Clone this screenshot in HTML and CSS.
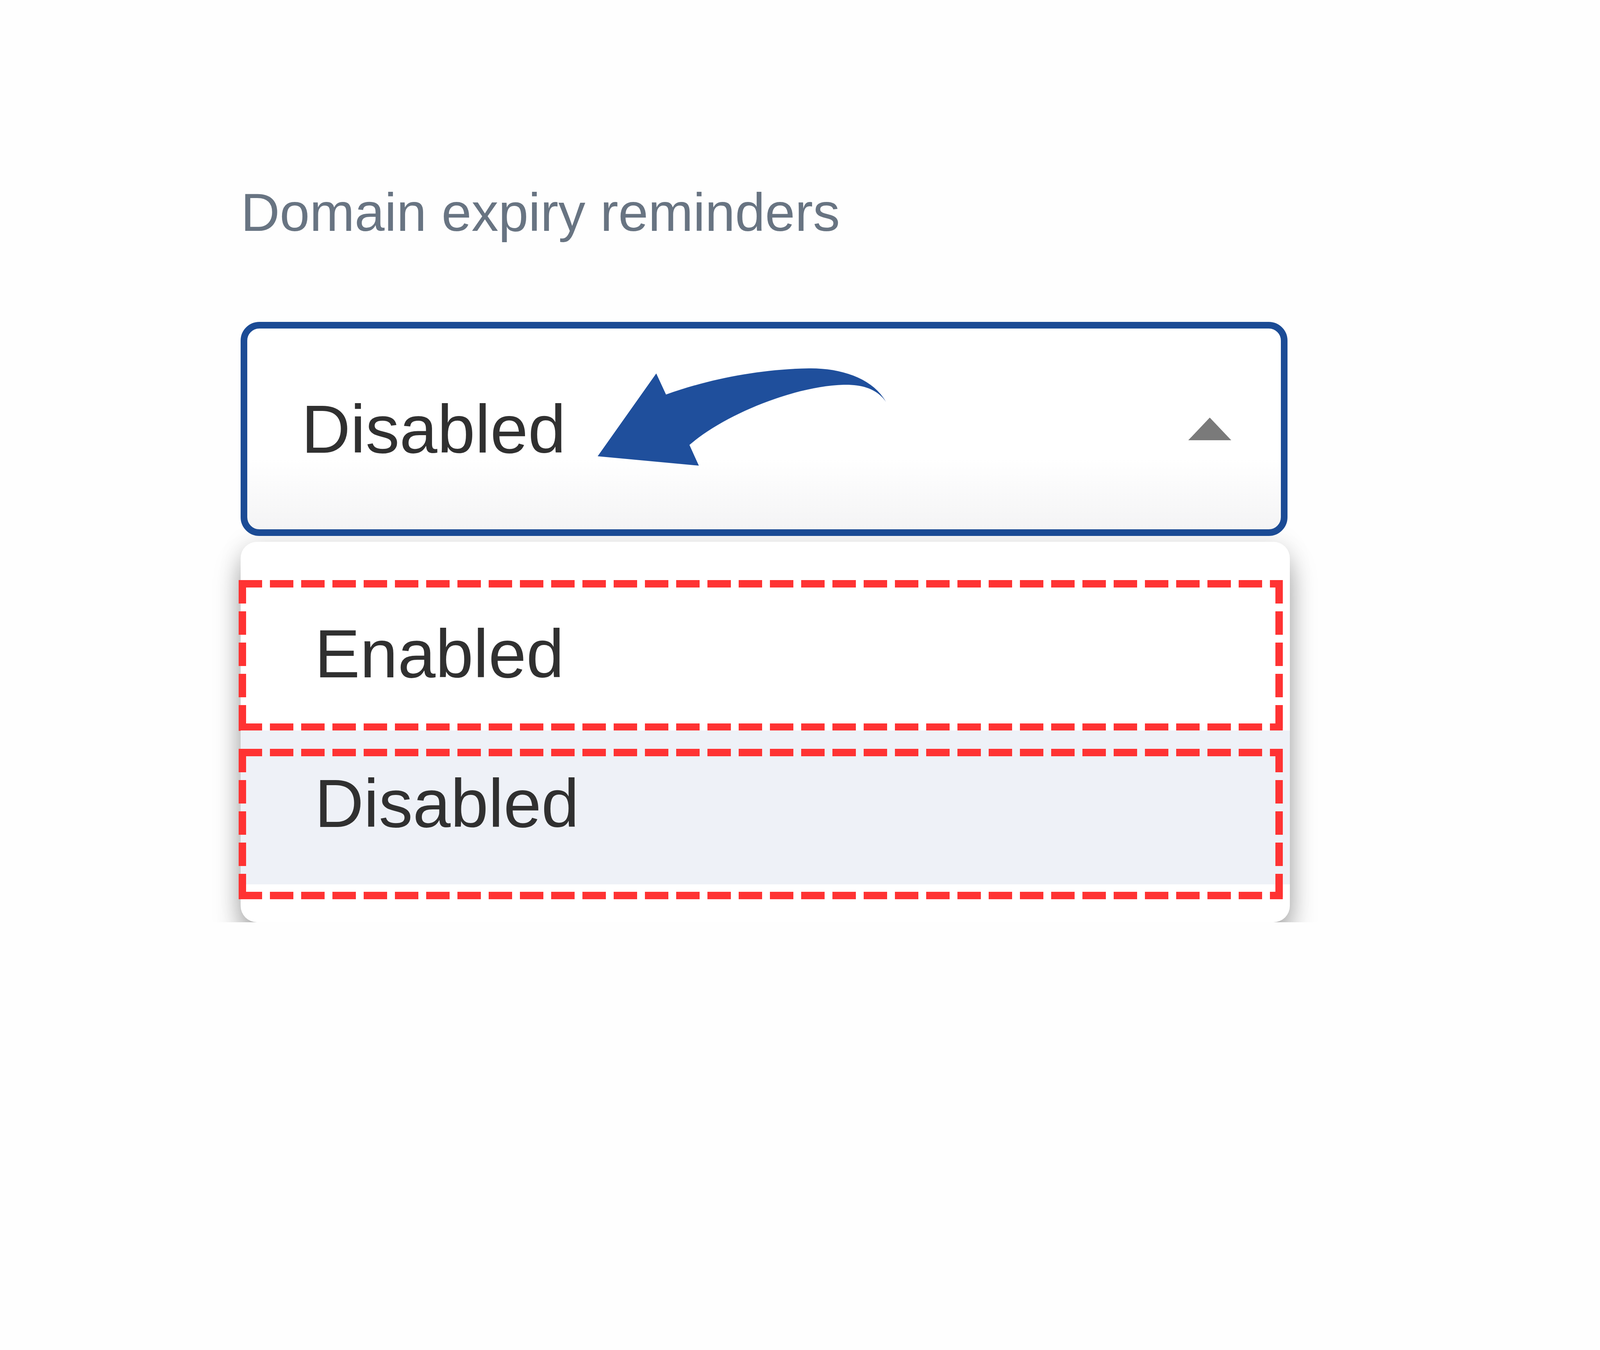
FILE: index.html
```html
<!DOCTYPE html>
<html lang="en">
<head>
    <meta charset="UTF-8">
    <meta name="viewport" content="width=device-width, initial-scale=1.0">
    <title>Domain expiry reminders</title>
    <link rel="stylesheet" href="styles.css">
</head>
<body>

<div class="field">
    <label class="field-label" for="reminders">Domain expiry reminders</label>
    <div class="select" id="reminders">
        <span class="select-value">Disabled</span>
        <span class="caret"></span>
        <!-- annotation arrow pointing at the current value -->
        <svg class="callout-arrow" width="770" height="270" viewBox="0 0 770 270">
            <path d="M14 238 L164 26 L189 80 C300 40 430 15 555 13 C640 12 720 40 752 99 C730 65 690 54 644 55 C520 58 340 130 249 209 L273 262 Z" fill="#1f4f9c"/>
        </svg>
    </div>
    <ul class="menu">
        <li class="option">Enabled</li>
        <li class="option active">Disabled</li>
    </ul>
</div>

</body>
</html>
```

FILE: styles.css
```css
body {
    margin: 0;
    background-color: #fefefe;
    font-family: "Liberation Sans", Arial, sans-serif;
}
/* widths follow the window: 1vw = 69.12px on the 6912px reference */
.field {
    padding: 464px 0 0 15.05vw;
    width: 65.57vw;
}
.field-label {
    display: block;
    font-size: 138px;
    line-height: 159px;
    color: #687482;
    margin-bottom: 201px;
    white-space: nowrap;
}
.select {
    position: relative;
    box-sizing: border-box;
    width: 65.42vw;
    height: 548px;
    border: 17px solid #1b4b95;
    border-radius: 48px;
    background: linear-gradient(#fff 65%, #f4f4f5);
    display: flex;
    align-items: center;
    justify-content: space-between;
    padding: 0 127px 0 138px;
}
.select-value {
    font-size: 174px;
    color: #303030;
}
.caret {
    width: 0;
    height: 0;
    border-left: 55px solid transparent;
    border-right: 55px solid transparent;
    border-bottom: 58px solid #7a7a7a;
}
.callout-arrow {
    position: absolute;
    left: 883px;
    top: 89px;
}
.menu {
    list-style: none;
    margin: 15px 0 0;
    padding: 89px 0 97px;
    background: #fff;
    border-radius: 42px;
    box-shadow: 0 45px 70px -5px rgba(0, 0, 0, 0.38), 0 0 60px rgba(0, 0, 0, 0.1);
}
.option {
    position: relative;
    height: 394px;
    box-sizing: border-box;
    display: flex;
    align-items: center;
    padding-left: 189px;
    font-size: 174px;
    color: #303030;
}
.option.active {
    background-color: #eef1f7;
    padding-bottom: 22px;
}
/* red dashed annotation boxes */
.option::after {
    content: "";
    position: absolute;
    left: -5px;
    right: 18px;
    top: 9px;
    bottom: -1px;
    background:
        repeating-linear-gradient(90deg, #ff3333 0 60px, transparent 60px 80px) top / 100% 19px no-repeat,
        repeating-linear-gradient(90deg, #ff3333 0 60px, transparent 60px 80px) bottom / 100% 19px no-repeat,
        repeating-linear-gradient(180deg, #ff3333 0 60px, transparent 60px 80px) left / 19px 100% no-repeat,
        repeating-linear-gradient(180deg, #ff3333 0 60px, transparent 60px 80px) right / 19px 100% no-repeat;
}
.option.active::after {
    top: 47px;
    bottom: -38px;
}
```
